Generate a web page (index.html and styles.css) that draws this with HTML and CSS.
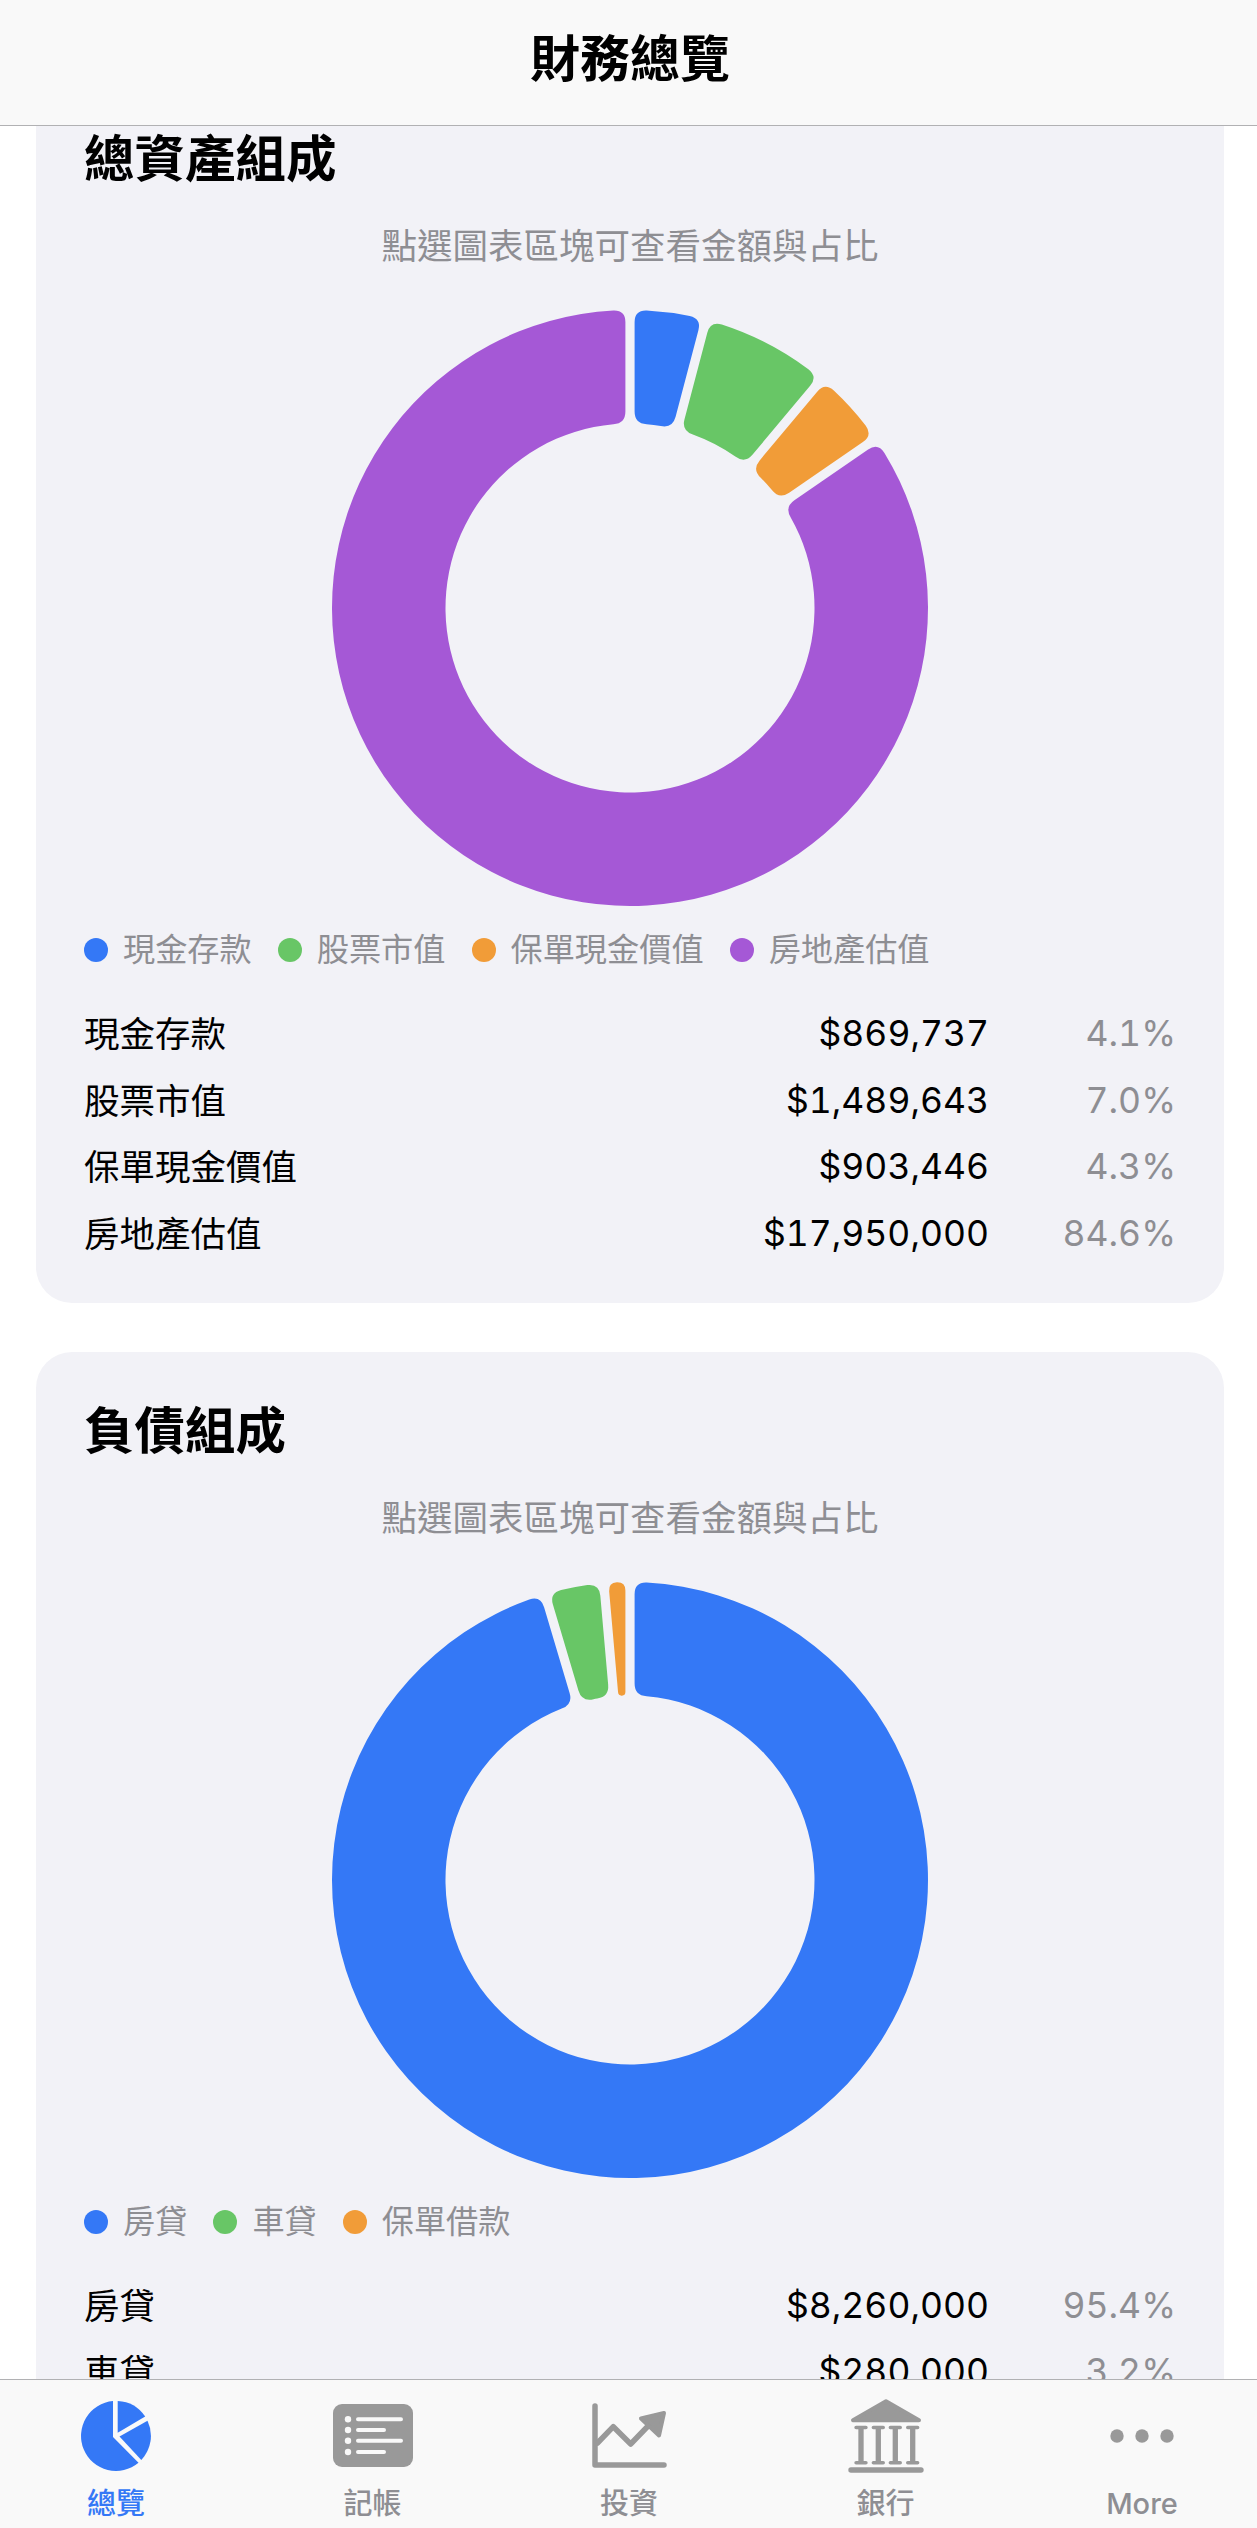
FILE: index.html
```html
<!DOCTYPE html>
<html lang="zh-Hant">

<head>
  <meta charset="UTF-8">
  <title>財務總覽</title>
  <link rel="stylesheet" href="styles.css">
</head>

<body>
  <div class="page">

    <!-- 頂部標題列 -->
    <header class="nav-bar">
      <h1 class="nav-title">財務總覽</h1>
    </header>

    <main class="content">

      <section class="card">
        <h2 class="card-title">總資產組成</h2>
        <p class="card-hint">點選圖表區塊可查看金額與占比</p>
        <svg class="donut" viewBox="0 0 600 600" data-slices="blue:4.1 green:7.0 orange:4.3 purple:84.6"></svg>
        <ul class="legend">
          <li class="legend-item"><span class="dot blue"></span>現金存款</li>
          <li class="legend-item"><span class="dot green"></span>股票市值</li>
          <li class="legend-item"><span class="dot orange"></span>保單現金價值</li>
          <li class="legend-item"><span class="dot purple"></span>房地產估值</li>
        </ul>
        <div class="rows">
          <div class="row"><span class="row-label">現金存款</span><span class="row-amount">$869,737</span><span class="row-pct">4.1%</span></div>
          <div class="row"><span class="row-label">股票市值</span><span class="row-amount">$1,489,643</span><span class="row-pct">7.0%</span></div>
          <div class="row"><span class="row-label">保單現金價值</span><span class="row-amount">$903,446</span><span class="row-pct">4.3%</span></div>
          <div class="row"><span class="row-label">房地產估值</span><span class="row-amount">$17,950,000</span><span class="row-pct">84.6%</span></div>
        </div>
      </section>

      <section class="card">
        <h2 class="card-title">負債組成</h2>
        <p class="card-hint">點選圖表區塊可查看金額與占比</p>
        <svg class="donut" viewBox="0 0 600 600" data-slices="blue:95.4 green:3.2 orange:1.4"></svg>
        <ul class="legend">
          <li class="legend-item"><span class="dot blue"></span>房貸</li>
          <li class="legend-item"><span class="dot green"></span>車貸</li>
          <li class="legend-item"><span class="dot orange"></span>保單借款</li>
        </ul>
        <div class="rows">
          <div class="row"><span class="row-label">房貸</span><span class="row-amount">$8,260,000</span><span class="row-pct">95.4%</span></div>
          <div class="row"><span class="row-label">車貸</span><span class="row-amount">$280,000</span><span class="row-pct">3.2%</span></div>
        </div>
      </section>

    </main>

    <!-- 底部分頁列 -->
    <nav class="tab-bar">
      <a class="tab active">
        <span class="tab-icon">
          <svg width="70" height="70" viewBox="0 0 70 70">
            <path d="M32 0.1V36L57.5 61.8A35 35 0 1 1 32 0.1Z" />
            <path d="M36.7 0A35 35 0 0 1 64.2 15.6L36.7 31.7Z" />
            <path d="M38.5 35.5L66.5 19.8A35 35 0 0 1 60.3 59Z" />
          </svg>
        </span>
        <span class="tab-label">總覽</span>
      </a>
      <a class="tab">
        <span class="tab-icon">
          <svg width="80" height="63" viewBox="0 0 80 63">
            <rect width="80" height="63" rx="9" />
            <g class="list-lines">
              <path d="M25 15.3H68M25 26H51M25 36.7H68M25 48H51" />
            </g>
            <g class="list-dots">
              <circle cx="15" cy="15.3" r="3.2" />
              <circle cx="15" cy="26" r="3.2" />
              <circle cx="15" cy="36.7" r="3.2" />
              <circle cx="15" cy="48" r="3.2" />
            </g>
          </svg>
        </span>
        <span class="tab-label">記帳</span>
      </a>
      <a class="tab">
        <span class="tab-icon">
          <svg width="78" height="68" viewBox="0 0 78 68">
            <g class="icon-line">
              <path d="M5 4V63H74" />
              <path d="M7.5 41L23.3 24.7L40.7 42L60 22" />
            </g>
            <path class="icon-solid" d="M74 11L51 16.5L69 33.5Z" />
          </svg>
        </span>
        <span class="tab-label">投資</span>
      </a>
      <a class="tab">
        <span class="tab-icon">
          <svg width="80" height="76" viewBox="0 0 80 76">
            <path class="icon-solid" d="M40 3.3L7 22.3H73Z" />
            <g class="bank-columns">
              <path d="M15 29V65M32.3 29V65M49.3 29V65M66.7 29V65" />
            </g>
            <g class="bank-caps">
              <path d="M10.1 29.5H19.9M27.4 29.5H37.2M44.4 29.5H54.2M61.8 29.5H71.6M10.1 64.7H19.9M27.4 64.7H37.2M44.4 64.7H54.2M61.8 64.7H71.6" />
            </g>
            <path class="bank-base" d="M5 72H75" />
          </svg>
        </span>
        <span class="tab-label">銀行</span>
      </a>
      <a class="tab">
        <span class="tab-icon">
          <svg width="64" height="14" viewBox="0 0 64 14">
            <circle cx="7" cy="7" r="6.7" />
            <circle cx="32" cy="7" r="6.7" />
            <circle cx="57" cy="7" r="6.7" />
          </svg>
        </span>
        <span class="tab-label">More</span>
      </a>
    </nav>

  </div>

  <script src="script.js"></script>
</body>

</html>
```

FILE: styles.css
```css
* {
  box-sizing: border-box;
}

body {
  margin: 0;
  background: #fff;
  color: #000;
  font-family: "Inter", "Noto Sans CJK TC", sans-serif;
}

.page {
  position: relative;
  height: 2528px;
  overflow: hidden;
}

/* 頂部標題列 */
.nav-bar {
  position: absolute;
  top: 0;
  left: 0;
  right: 0;
  z-index: 10;
  height: 125.5px;
  padding-bottom: 7px;
  display: flex;
  justify-content: center;
  align-items: center;
  background: #f9f9f9;
  border-bottom: 1.5px solid #b1b1b3;
}

.nav-title {
  margin: 0;
  padding-left: 3px;
  font-size: 50px;
  line-height: 60px;
  font-weight: 600;
}

.content {
  padding: 80px 0 0 36px;
}

.card {
  width: 1188px;
  padding: 49px 48px 36px;
  margin-bottom: 49px;
  background: #f2f2f7;
  border-radius: 36px;
}

.card-title {
  margin: 0;
  font-size: 50.5px;
  line-height: 60px;
  font-weight: 700;
}

.card-hint {
  margin: 36px 0 0;
  font-size: 35.5px;
  line-height: 44px;
  color: #8e8e93;
  text-align: center;
}

.donut {
  display: block;
  width: 600px;
  height: 600px;
  margin: 39px auto 0;
}

.legend {
  display: flex;
  gap: 26px;
  margin: 20px 0 0;
  padding: 0;
  list-style: none;
}

.legend-item {
  display: flex;
  align-items: center;
  gap: 15px;
  font-size: 32.2px;
  line-height: 44px;
  color: #8e8e93;
}

.dot {
  width: 24px;
  height: 24px;
  border-radius: 50%;
}

.dot.blue { background: #3478f6; }
.dot.green { background: #68c666; }
.dot.orange { background: #f19c38; }
.dot.purple { background: #a558d6; }

.slice-blue { fill: #3478f6; }
.slice-green { fill: #68c666; }
.slice-orange { fill: #f19c38; }
.slice-purple { fill: #a558d6; }

.rows {
  margin-top: 28px;
}

.row {
  display: flex;
  align-items: center;
  height: 66.7px;
  font-size: 35.5px;
}

.row-label {
  flex: 1;
  padding-bottom: 4px;
}

.row-amount,
.row-pct {
  font-variant-numeric: tabular-nums;
}

.row-pct {
  width: 187px;
  color: #8e8e93;
  text-align: right;
}

/* 底部分頁列 */
.tab-bar {
  position: absolute;
  left: 0;
  right: 0;
  bottom: 0;
  z-index: 10;
  height: 149px;
  padding: 15.5px 0 0 1px;
  display: grid;
  grid-template-columns: repeat(5, 256.5px);
  justify-content: center;
  background: #f9f9f9;
  border-top: 1.5px solid #b1b1b3;
}

.tab {
  display: flex;
  flex-direction: column;
  align-items: center;
  gap: 10px;
  color: #8e8e93;
}

.tab-icon {
  height: 80px;
  display: flex;
  align-items: center;
}

.tab-icon svg {
  display: block;
  fill: #999;
}

.tab-label {
  font-size: 29px;
  line-height: 36px;
  font-weight: 500;
}

.tab.active {
  color: #3478f6;
}

.tab.active svg {
  fill: #3478f6;
}

.list-lines path {
  fill: none;
  stroke: #f9f9f9;
  stroke-width: 4;
  stroke-linecap: round;
}

.list-dots circle {
  fill: #f9f9f9;
}

.icon-line path {
  fill: none;
  stroke: #999;
  stroke-width: 5.5;
  stroke-linecap: round;
  stroke-linejoin: round;
}

.icon-solid {
  stroke: #999;
  stroke-width: 4;
  stroke-linejoin: round;
}

.bank-columns path {
  fill: none;
  stroke: #999;
  stroke-width: 5.3;
}

.bank-caps path {
  fill: none;
  stroke: #999;
  stroke-width: 3.6;
  stroke-linecap: round;
}

.bank-base {
  fill: none;
  stroke: #999;
  stroke-width: 5.4;
  stroke-linecap: round;
}
```

FILE: script.js
```js
// 由比例資料畫出甜甜圈圖的圓角區塊
const CENTER = 300;
const OUTER = 298;
const INNER = 184.5;
const GAP = 4.6;
const CORNER = 12;

function point(radius, angle) {
  return [CENTER + radius * Math.sin(angle), CENTER - radius * Math.cos(angle)];
}

function toward(from, to, dist) {
  const dx = to[0] - from[0];
  const dy = to[1] - from[1];
  const len = Math.hypot(dx, dy);
  return [from[0] + (dx / len) * dist, from[1] + (dy / len) * dist];
}

function fmt(p) {
  return p[0].toFixed(2) + ' ' + p[1].toFixed(2);
}

function slicePath(start, end) {
  const outStart = start + Math.asin(GAP / OUTER);
  const outEnd = end - Math.asin(GAP / OUTER);
  const inStart = start + Math.asin(GAP / INNER);
  const inEnd = end - Math.asin(GAP / INNER);

  // 窄的區塊圓角要縮小
  const outC = Math.min(CORNER, ((outEnd - outStart) * OUTER) / 2);
  const inC = Math.min(CORNER, ((inEnd - inStart) * INNER) / 2);

  const o0 = point(OUTER, outStart);
  const o1 = point(OUTER, outEnd);
  const i0 = point(INNER, inStart);
  const i1 = point(INNER, inEnd);
  const bigOut = outEnd - outStart > Math.PI ? 1 : 0;
  const bigIn = inEnd - inStart > Math.PI ? 1 : 0;

  return [
    'M' + fmt(point(OUTER, outStart + outC / OUTER)),
    'A' + OUTER + ' ' + OUTER + ' 0 ' + bigOut + ' 1 ' + fmt(point(OUTER, outEnd - outC / OUTER)),
    'Q' + fmt(o1) + ' ' + fmt(toward(o1, i1, outC)),
    'L' + fmt(toward(i1, o1, inC)),
    'Q' + fmt(i1) + ' ' + fmt(point(INNER, inEnd - inC / INNER)),
    'A' + INNER + ' ' + INNER + ' 0 ' + bigIn + ' 0 ' + fmt(point(INNER, inStart + inC / INNER)),
    'Q' + fmt(i0) + ' ' + fmt(toward(i0, o0, inC)),
    'L' + fmt(toward(o0, i0, outC)),
    'Q' + fmt(o0) + ' ' + fmt(point(OUTER, outStart + outC / OUTER)),
    'Z'
  ].join(' ');
}

document.querySelectorAll('.donut').forEach(function (svg) {
  let angle = 0;
  svg.dataset.slices.split(' ').forEach(function (item) {
    const parts = item.split(':');
    const next = angle + (parseFloat(parts[1]) / 100) * Math.PI * 2;
    const path = document.createElementNS('http://www.w3.org/2000/svg', 'path');
    path.setAttribute('class', 'slice-' + parts[0]);
    path.setAttribute('d', slicePath(angle, next));
    svg.appendChild(path);
    angle = next;
  });
});
```
